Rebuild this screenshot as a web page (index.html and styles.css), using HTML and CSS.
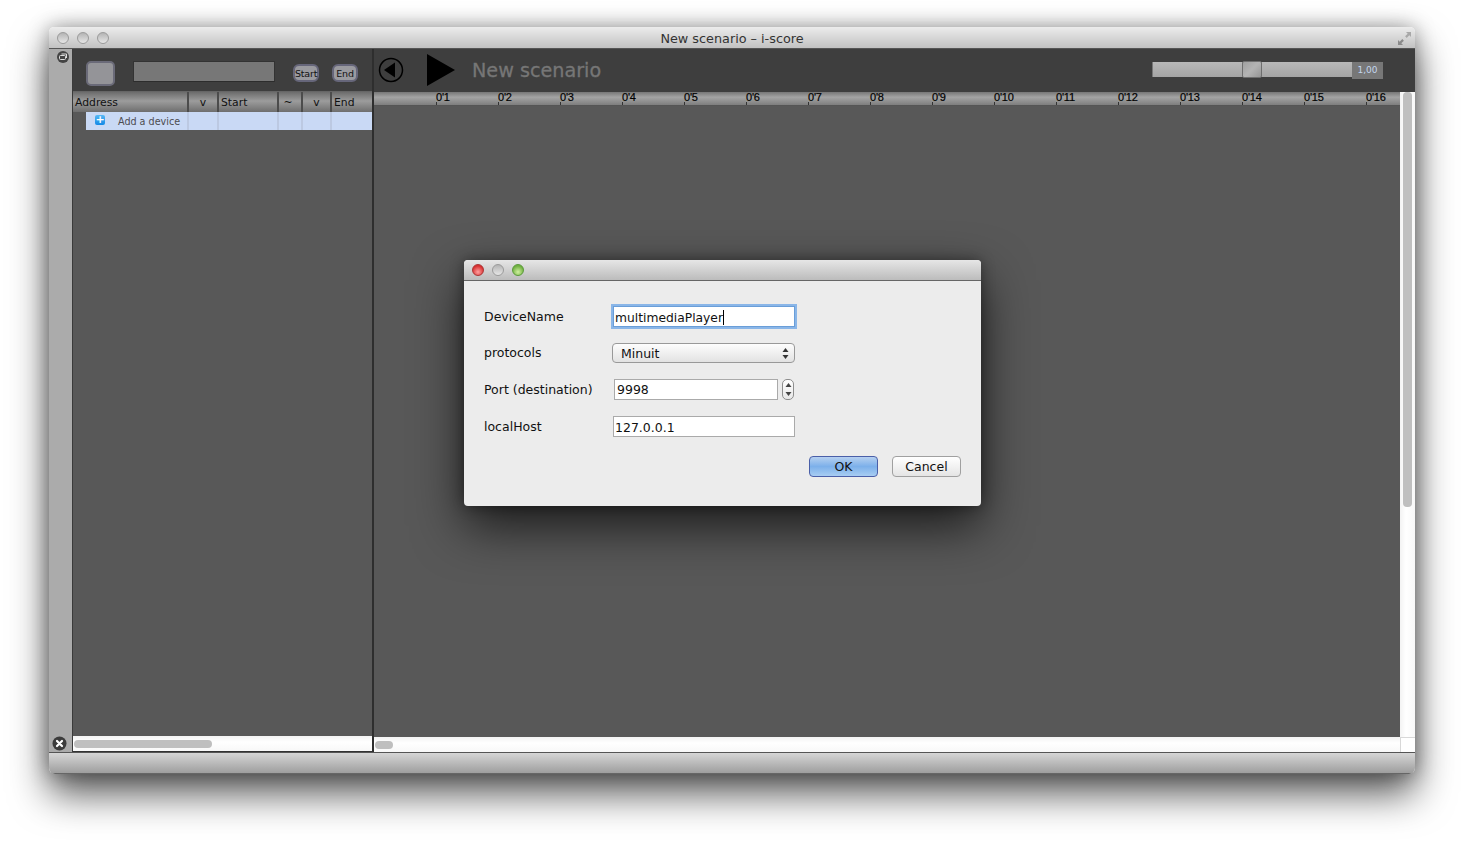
FILE: index.html
```html
<!DOCTYPE html>
<html lang="en">
<head>
    <meta charset="UTF-8">
    <title>New scenario - i-score</title>
    <link rel="stylesheet" href="styles.css">
</head>
<body>
    <div class="window">
        <!-- Title bar -->
        <div class="titlebar">
            <div class="lights">
                <span class="light"></span>
                <span class="light"></span>
                <span class="light"></span>
            </div>
            <span class="window-title">New scenario – i-score</span>
            <svg class="expand" width="15" height="15" viewBox="0 0 15 15">
                <path d="M9 1h5v5l-1.700-1.700-2.600 2.600-1.600-1.600 2.600-2.600z" fill="#a8a8a8"/>
                <path d="M1 9v5h5l-1.700-1.700 2.600-2.600-1.600-1.600-2.600 2.600z" fill="#8a8a8a"/>
            </svg>
        </div>

        <div class="main">
            <!-- Drawer strip -->
            <div class="strip">
                <svg width="12" height="12" viewBox="0 0 12 12">
                    <circle cx="6" cy="6" r="6" fill="#444"/>
                    <rect x="2.500" y="4.500" width="6" height="4" rx="1" fill="none" stroke="#ddd" stroke-width="1"/>
                    <path d="M4.500 3h5v4" fill="none" stroke="#ddd" stroke-width="1"/>
                </svg>
                <svg width="15" height="15" viewBox="0 0 15 15">
                    <circle cx="7.500" cy="7.500" r="7" fill="#3c3c3c"/>
                    <path d="M5 5l5 5M10 5l-5 5" stroke="#fff" stroke-width="2.200" stroke-linecap="round"/>
                </svg>
            </div>

            <!-- Device panel -->
            <div class="panel">
                <div class="panel-toolbar">
                    <span class="swatch"></span>
                    <span class="search"></span>
                    <span class="pill pill-start">Start</span>
                    <span class="pill">End</span>
                </div>
                <div class="table-head">
                    <span class="col col-address">Address</span>
                    <span class="col col-v center">v</span>
                    <span class="col col-start">Start</span>
                    <span class="col col-tilde center">~</span>
                    <span class="col col-v2 center">v</span>
                    <span class="col col-end">End</span>
                </div>
                <div class="table-row">
                    <span class="cell col-address cell-address">
                        <span class="plus">+</span>
                        <span class="add-label">Add a device</span>
                    </span>
                    <span class="cell col-v"></span>
                    <span class="cell col-start"></span>
                    <span class="cell col-tilde"></span>
                    <span class="cell col-v2"></span>
                    <span class="cell col-end"></span>
                </div>
                <div class="panel-fill"></div>
                <div class="hscroll panel-scroll"><span class="thumb thumb-panel"></span></div>
            </div>

            <!-- Scenario view -->
            <div class="scenario">
                <div class="scenario-toolbar">
                    <svg class="back" width="26" height="26" viewBox="0 0 26 26">
                        <circle cx="13" cy="13" r="11.500" fill="none" stroke="#000" stroke-width="1.500"/>
                        <path d="M6 13l11-7.500v15z" fill="#000"/>
                    </svg>
                    <svg class="play" width="30" height="34" viewBox="0 0 30 34">
                        <path d="M1 1l28 16-28 16z" fill="#000"/>
                    </svg>
                    <span class="scenario-name">New scenario</span>
                    <div class="zoom-slider">
                        <div class="zoom-track"><span class="zoom-handle"></span></div>
                        <span class="zoom-value">1,00</span>
                    </div>
                </div>
                <div class="scenario-body">
                    <div class="scenario-view">
                        <div class="ruler" id="ruler"></div>
                        <div class="canvas"></div>
                        <div class="hscroll view-scroll"><span class="thumb thumb-view"></span></div>
                    </div>
                    <div class="vscroll">
                        <div class="vscroll-track"><span class="thumb-v"></span></div>
                        <span class="scroll-corner"></span>
                    </div>
                </div>
            </div>
        </div>

        <div class="footer"></div>
    </div>

    <!-- Add device dialog -->
    <div class="dialog">
        <div class="dialog-title">
            <span class="light light-red"></span>
            <span class="light"></span>
            <span class="light light-green"></span>
        </div>
        <div class="dialog-form">
            <label class="form-label">DeviceName</label>
            <div class="input input-focus">multimediaPlayer<span class="caret"></span></div>

            <label class="form-label label-protocols">protocols</label>
            <div class="select">
                <span>Minuit</span>
                <svg width="7" height="11" viewBox="0 0 7 11"><path d="M3.500 0l3 4h-6zM3.500 11l3-4h-6z" fill="#333"/></svg>
            </div>

            <label class="form-label">Port (destination)</label>
            <div class="port-row">
                <div class="input input-port">9998</div>
                <div class="stepper">
                    <svg width="7" height="17" viewBox="0 0 7 17"><path d="M3.500 2l3 4h-6zM3.500 15l3-4h-6z" fill="#444"/></svg>
                </div>
            </div>

            <label class="form-label">localHost</label>
            <div class="input input-host">127.0.0.1</div>
        </div>
        <div class="dialog-buttons">
            <span class="button button-ok">OK</span>
            <span class="button">Cancel</span>
        </div>
    </div>

    <script>
        // Ruler marks, one every second
        const ruler = document.querySelector("#ruler");
        for (let i = 1; i <= 16; i++) {
            const mark = document.createElement("span");
            mark.className = "mark";
            mark.textContent = "0'" + i;
            ruler.appendChild(mark);
        }
    </script>
</body>
</html>
```

FILE: styles.css
```css
/* Basic page styling */
body {
    margin: 0;
    padding: 27px 49px 0;
    height: 844px;
    box-sizing: border-box;
    overflow: hidden;
    background-color: #fff;
    font-family: "DejaVu Sans", sans-serif;
    position: relative;
}

/* Main window */
.window {
    width: 1366px;
    height: 747px;
    display: flex;
    flex-direction: column;
    border-radius: 5px 5px 6px 6px;
    overflow: hidden;
    box-shadow: 0 20px 38px rgba(0,0,0,0.65), 0 0 20px rgba(0,0,0,0.35);
}

.titlebar {
    height: 21px;
    flex: none;
    display: flex;
    align-items: center;
    justify-content: center;
    position: relative;
    background: linear-gradient(#ececec, #c2c2c2);
    border-bottom: 1px solid #555;
}

.lights {
    position: absolute;
    left: 8px;
    top: 5px;
    display: flex;
    gap: 8px;
}

.light {
    width: 12px;
    height: 12px;
    border-radius: 50%;
    box-sizing: border-box;
    border: 1px solid #9a9a9a;
    background: linear-gradient(#b4b4b4, #e6e6e6);
}

.window-title {
    font-size: 12.800px;
    color: #333;
    margin-top: 2px;
}

.expand {
    position: absolute;
    right: 3px;
    top: 4px;
}

.main {
    flex: 1;
    display: flex;
    min-height: 0;
}

.strip {
    width: 24px;
    flex: none;
    display: flex;
    flex-direction: column;
    justify-content: space-between;
    align-items: flex-start;
    padding: 2px 0 1px 3px;
    box-sizing: border-box;
    background-color: #ababab;
    border-right: 1px solid #3a3a3a;
}

.strip svg:first-child {
    margin-left: 5px;
}

/* Device panel */
.panel {
    width: 299px;
    flex: none;
    display: flex;
    flex-direction: column;
    background-color: #585858;
    border-right: 2px solid #2e2e2e;
    box-sizing: content-box;
}

.panel-toolbar {
    height: 42px;
    flex: none;
    display: flex;
    align-items: flex-start;
    background-color: #3e3e3e;
    box-sizing: border-box;
    padding-left: 13px;
}

.swatch {
    width: 29px;
    height: 25px;
    margin-top: 12px;
    box-sizing: border-box;
    background-color: #949498;
    border: 2px solid #6a6a78;
    border-radius: 5px;
}

.search {
    width: 142px;
    height: 21px;
    margin: 12px 0 0 18px;
    box-sizing: border-box;
    background-color: #777;
    border: 1px solid #333;
    border-bottom-color: #2c2c2c;
}

.pill {
    width: 26px;
    height: 18px;
    margin: 15px 0 0 13px;
    box-sizing: border-box;
    background-color: #9a9a9f;
    border: 2px solid #66667a;
    border-radius: 6px;
    font-size: 9.500px;
    letter-spacing: -0.2px;
    line-height: 15px;
    text-align: center;
    color: #111;
}

.pill-start {
    margin-left: 18px;
}

.table-head {
    height: 21px;
    flex: none;
    display: flex;
    box-sizing: border-box;
    border-top: 1px solid #666;
    background: linear-gradient(#6c6c6c, #9c9c9c 45%, #6e6e6e);
}

.col {
    box-sizing: border-box;
    font-size: 10.800px;
    line-height: 22px;
    color: #111;
    padding-left: 2px;
    border-right: 2px solid #4c4c4c;
}

.center {
    text-align: center;
    padding-left: 0;
}

.col-address { width: 116px; }
.col-v { width: 30px; }
.col-start { width: 60px; }
.col-tilde { width: 24px; }
.col-v2 { width: 29px; }
.col-end { width: 40px; border-right: 0; }

.col.col-tilde {
    padding-right: 4px;
}

.table-row {
    height: 18px;
    flex: none;
    display: flex;
    background-color: #c9d9f5;
}

.cell {
    box-sizing: border-box;
    border-right: 2px solid #bcc9e2;
}

.cell.col-end {
    border-right: 0;
}

.cell-address {
    display: flex;
    align-items: center;
    border-left: 13px solid #585858;
    position: relative;
}

.plus {
    position: absolute;
    left: 9px;
    top: 3px;
    width: 10px;
    height: 10px;
    border-radius: 2px;
    background: linear-gradient(#57b8f5, #1389e6);
    color: #fff;
    font-size: 11px;
    font-weight: bold;
    line-height: 10px;
    text-align: center;
}

.add-label {
    margin-left: 32px;
    font-size: 9.600px;
    color: #4c4c50;
    white-space: nowrap;
}

.panel-fill {
    flex: 1;
}

/* Scrollbars */
.hscroll {
    height: 15px;
    flex: none;
    display: flex;
    align-items: center;
    background: linear-gradient(#f3f3f3, #fff 40%, #f8f8f8);
}

.panel-scroll {
    height: 16px;
    border-bottom: 1px solid #333;
    box-sizing: border-box;
}

.thumb {
    display: block;
    height: 8px;
    border-radius: 4px;
    background-color: #bfbfbf;
}

.thumb-panel {
    width: 138px;
    margin-left: 1px;
}

.thumb-view {
    width: 18px;
    margin-left: 1px;
}

/* Scenario view */
.scenario {
    flex: 1;
    min-width: 0;
    display: flex;
    flex-direction: column;
    background-color: #585858;
}

.scenario-toolbar {
    height: 43px;
    flex: none;
    display: flex;
    align-items: center;
    background-color: #3e3e3e;
}

.back {
    margin: 0 0 2px 4px;
}

.play {
    margin: 0 0 2px 22px;
}

.scenario-name {
    margin-left: 16px;
    font-size: 19.200px;
    color: #767676;
    -webkit-text-stroke: 0.3px #767676;
}

.zoom-slider {
    margin-left: auto;
    margin-right: 32px;
    display: flex;
    align-items: flex-start;
}

.zoom-track {
    width: 200px;
    height: 15px;
    position: relative;
    background: linear-gradient(#b8b8b8, #a4a4a4);
    border-left: 1px solid #777;
    box-sizing: border-box;
}

.zoom-handle {
    position: absolute;
    left: 89px;
    top: -1px;
    width: 20px;
    height: 17px;
    box-sizing: border-box;
    border: 1px solid #6e6e6e;
    border-radius: 2px;
    background: linear-gradient(135deg, #a0a0a0, #b4b4b4 50%, #969696);
}

.zoom-value {
    width: 31px;
    height: 17px;
    background-color: #777;
    color: #c3d6ee;
    font-size: 9px;
    line-height: 17px;
    text-align: center;
}

.scenario-body {
    flex: 1;
    min-height: 0;
    display: flex;
}

.scenario-view {
    flex: 1;
    min-width: 0;
    display: flex;
    flex-direction: column;
}

.ruler {
    height: 13px;
    flex: none;
    display: flex;
    padding-left: 62px;
    overflow: hidden;
    background: linear-gradient(#777, #a4a4a4 40%, #7e7e7e);
    border-bottom: 1px solid #555;
}

.mark {
    width: 62px;
    flex: none;
    font-family: "Liberation Sans", Arial, sans-serif;
    font-size: 11px;
    line-height: 10px;
    letter-spacing: -0.2px;
    color: #000;
    -webkit-text-stroke: 0.2px #000;
    box-sizing: border-box;
    position: relative;
}

.mark::before {
    content: "";
    position: absolute;
    left: 0;
    bottom: 0;
    width: 1px;
    height: 3px;
    background-color: #333;
}

.canvas {
    flex: 1;
    background-color: #585858;
}

.view-scroll {
    height: 15px;
}

.vscroll {
    width: 15px;
    flex: none;
    display: flex;
    flex-direction: column;
    background: linear-gradient(90deg, #f3f3f3, #fff 40%, #f8f8f8);
}

.vscroll-track {
    flex: 1;
    padding: 0 3px;
}

.thumb-v {
    display: block;
    height: 415px;
    border-radius: 4px;
    background-color: #bfbfbf;
}

.scroll-corner {
    height: 15px;
    box-sizing: border-box;
    background-color: #fff;
    border: 1px solid #d8d8d8;
    border-width: 1px 0 0 1px;
}

.footer {
    height: 20px;
    flex: none;
    background: linear-gradient(#d6d6d6, #9e9e9e);
    border-top: 1px solid #555;
    border-bottom: 1px solid #666;
    box-sizing: content-box;
}

/* Dialog floats over the main window */
.dialog {
    position: absolute;
    left: 464px;
    top: 260px;
    width: 517px;
    height: 246px;
    display: flex;
    flex-direction: column;
    border-radius: 4px;
    overflow: hidden;
    background-color: #ececec;
    box-shadow: 0 20px 50px rgba(0,0,0,0.7), 0 0 14px rgba(0,0,0,0.4);
}

.dialog-title {
    height: 20px;
    flex: none;
    display: flex;
    align-items: center;
    gap: 8px;
    padding-left: 8px;
    background: linear-gradient(#e6e6e6, #bcbcbc);
    border-bottom: 1px solid #666;
}

.light-red {
    border-color: #a33;
    background: radial-gradient(circle at 50% 70%, #ffa0a0, #d83030 70%);
}

.light-green {
    border-color: #5a9a3a;
    background: radial-gradient(circle at 50% 70%, #d0f0a0, #70b040 70%);
}

.dialog-form {
    display: grid;
    grid-template-columns: 128px 183px;
    grid-template-rows: 21px 20px 21px 21px;
    row-gap: 16px;
    align-items: center;
    padding: 25px 0 0 20px;
}

.form-label {
    font-size: 12.500px;
    color: #111;
}

.label-protocols {
    margin-top: -2px;
}

.input {
    height: 21px;
    width: 182px;
    margin-left: 1px;
    box-sizing: border-box;
    padding-left: 2px;
    background-color: #fff;
    border: 1px solid #aaa;
    font-size: 12.500px;
    line-height: 20px;
    color: #111;
    white-space: nowrap;
}

.input-host {
    padding-left: 1px;
    line-height: 21px;
}

.input-focus {
    padding-left: 1px;
    font-size: 12.300px;
    line-height: 22px;
    border: 1px solid #6a9ed8;
    box-shadow: 0 0 0 2px #8ab6e8;
}

.caret {
    display: inline-block;
    width: 1px;
    height: 15px;
    background-color: #000;
    vertical-align: -3px;
}

.select {
    height: 20px;
    box-sizing: border-box;
    display: flex;
    align-items: center;
    justify-content: space-between;
    padding: 0 5px 0 8px;
    background: linear-gradient(#fdfdfd, #f0f0f0 50%, #e2e2e2);
    border: 1px solid #999;
    border-radius: 4px;
    font-size: 12.500px;
    color: #111;
}

.port-row {
    display: flex;
    justify-content: space-between;
    padding: 0 1px 0 2px;
}

.input-port {
    width: 164px;
    margin-left: 0;
}

.stepper {
    width: 12px;
    height: 21px;
    box-sizing: border-box;
    display: flex;
    align-items: center;
    justify-content: center;
    background: linear-gradient(#fff, #e8e8e8);
    border: 1px solid #8e8e8e;
    border-radius: 5px;
}

.dialog-buttons {
    display: flex;
    justify-content: flex-end;
    gap: 14px;
    padding: 19px 20px 0 0;
}

.button {
    width: 69px;
    height: 21px;
    box-sizing: border-box;
    background: linear-gradient(#fff, #f2f2f2 50%, #e4e4e4);
    border: 1px solid #a0a0a0;
    border-radius: 4px;
    font-size: 12.500px;
    line-height: 19px;
    text-align: center;
    color: #111;
}

.button-ok {
    background: linear-gradient(#b6d0f0, #7cb0ea 50%, #a8cdf2);
    border-color: #4a5fa8;
}
```
